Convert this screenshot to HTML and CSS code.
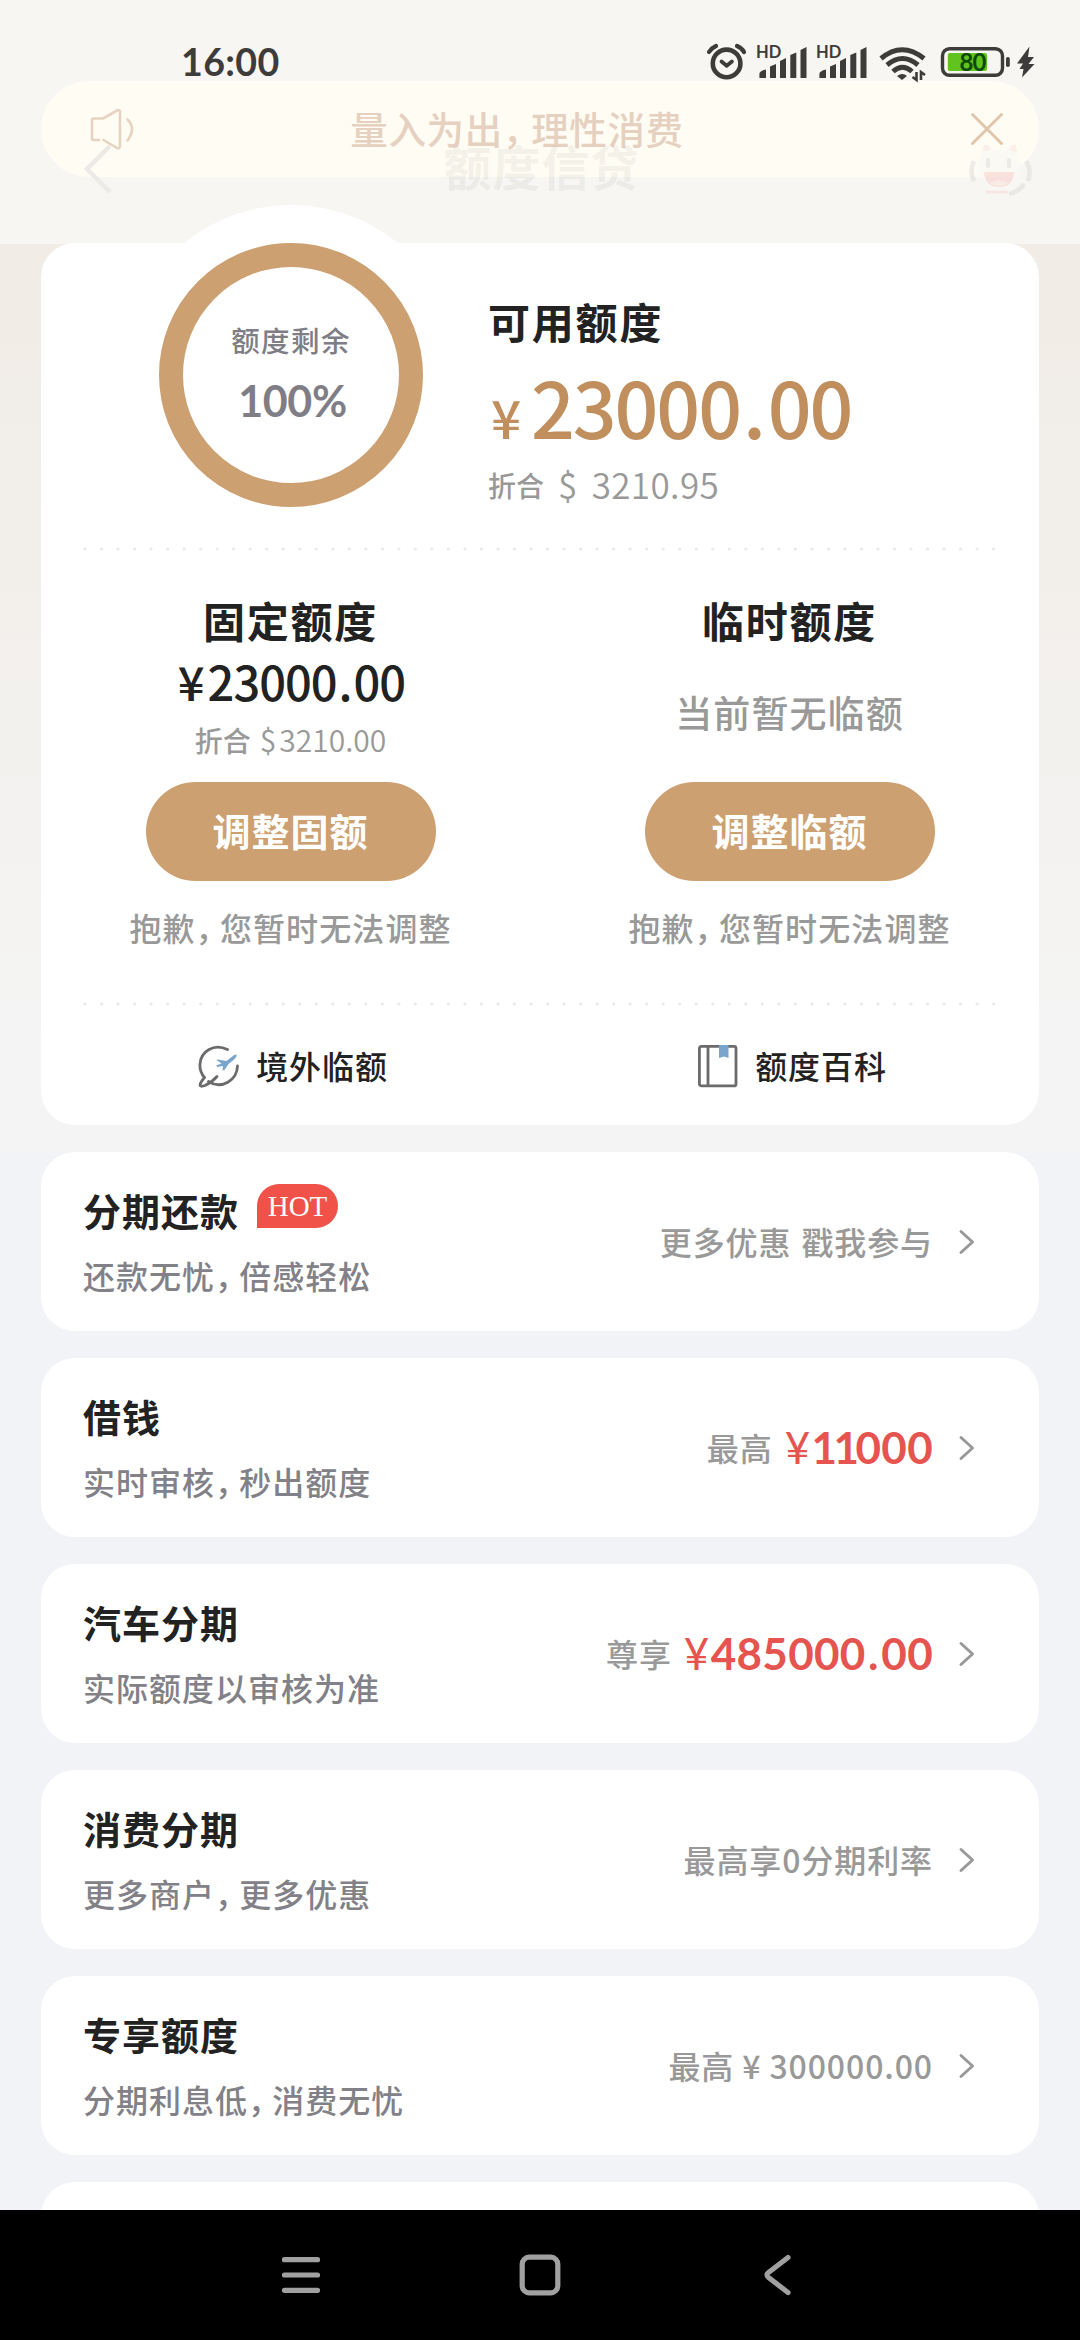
FILE: index.html
```html
<!DOCTYPE html>
<html lang="zh-CN">
<head>
<meta charset="utf-8">
<title>额度信贷</title>
<link rel="stylesheet" href="styles.css">
</head>
<body>
<div class="screen">
  <header class="header">
    <div class="status">
      <span class="time">16:00</span>
      <svg class="status-icons" width="330" height="44" viewBox="710 40 330 44">
        <g fill="none" stroke="#3d3c3a" stroke-linecap="round">
          <circle cx="725.6" cy="63.4" r="13.8" stroke-width="4.6"/>
          <path d="M720.5 61.5l5.2 4.3 5.2-4.3" stroke-width="3.8" stroke-linejoin="round"/>
          <path d="M708 52q2.500-4 7-6M736 46q5 2 7 6" stroke-width="4.200"/>
        </g>
        <g fill="#3d3c3a">
          <text class="hd" x="755" y="58">HD</text>
          <g id="bars"><path d="M758.400 78v-4q0-3 6.600-4.500v8.500zM769 78V66.500l6-2.500v14zM779 78V61l6-3v20zM789.300 78V55l6-2.500V78zM799.500 78V50l6-3V78z"/></g>
          <text class="hd" x="815" y="58">HD</text>
          <use href="#bars" x="60"/>
        </g>
        <g fill="none" stroke="#3d3c3a" stroke-width="5">
          <path d="M880 58.500q21-17.500 43 0"/>
          <path d="M886 65q15.500-13 31 0"/>
          <path d="M892 71.500q9.500-8.500 19 0"/>
        </g>
        <path d="M896 76q5.500-4 10 0l-5 4z" fill="#3d3c3a"/>
        <path d="M915.500 72v8l-4-3M920 80v-8l4 3" fill="none" stroke="#3d3c3a" stroke-width="2.600"/>
        <rect x="941.500" y="48.700" width="60" height="26.600" rx="7" fill="none" stroke="#3d3c3a" stroke-width="3.400"/>
        <rect x="946.800" y="53" width="39.200" height="18" rx="2" fill="#61c41e"/>
        <rect x="1005" y="57" width="3.800" height="10" rx="1.800" fill="#3d3c3a"/>
        <text class="pct" x="958.500" y="70.500">80</text>
        <path d="M1028.500 46.500L1016 63.500h6l-3.500 5.500h4l-1.500 8.500L1033.500 64h-6l5.500-7h-6z" fill="#3d3c3a"/>
      </svg>
    </div>
    <div class="titlebar">
      <svg class="back" width="30" height="52" viewBox="0 0 30 52"><path d="M27 3L4 26l23 23" fill="none" stroke="#ebeae7" stroke-width="4.500"/></svg>
      <h1 class="title">额度信贷</h1>
      <svg class="mascot" width="64" height="56" viewBox="0 0 64 56">
        <path d="M14 14l2-10q4-2 8 5h14q4-7 8-5l3 11q6 8 5 17-3 19-22 19T9 33q-1-11 5-19z" fill="#faf8f5"/>
        <path d="M14 10l2-6q4-1 7 5zM41 9q3-6 7-5l1 8z" fill="#fae9e5"/>
        <path d="M6 20q-5 9 0 20M58 20q6 9 2 20M56 43q-5 8-15 10" fill="none" stroke="#e3e2df" stroke-width="4.500"/>
        <path d="M20 19v6M41 19v6" stroke="#dfe2da" stroke-width="4" stroke-linecap="round"/>
        <path d="M16 31h30q-1 15-15 15T16 31z" fill="#f8d5d2"/>
        <path d="M22 42q9-5 18 0-9 6-18 0z" fill="#fbe8df"/>
        <path d="M18 51h22" stroke="#f8dedc" stroke-width="3"/>
      </svg>
    </div>
    <div class="notice">
      <svg width="46" height="42" viewBox="0 0 46 42" fill="none" stroke="#e8d3c1" stroke-width="2.600" stroke-linejoin="round" stroke-linecap="round"><path d="M9 32H3.500Q2 32 2 30V12.500q0-2 2-2h9L28 2q2 0 2 2v34q0 3-3 2L13.500 32M37.500 11.500q9 9 0 21"/></svg>
      <span class="notice-text">量入为出<i class="comma">，</i>理性消费</span>
      <svg width="34" height="34" viewBox="0 0 34 34" fill="none" stroke="#e0c6ac" stroke-width="3" stroke-linecap="round"><path d="M2.500 2.500l29 29m0-29l-29 29"/></svg>
    </div>
  </header>

  <main class="content">
    <section class="summary">
      <div class="overview">
        <div class="ring">
          <span class="ring-label">额度剩余</span>
          <span class="ring-value">100%</span>
        </div>
        <div class="available">
          <h2 class="heading">可用额度</h2>
          <div class="amount"><span class="yen">¥</span><span class="big">23000<i>.</i>00</span></div>
          <div class="converted"><span>折合</span><span class="usd">$</span><span class="usd">3210.95</span></div>
        </div>
      </div>
      <svg class="dots" width="912" height="4" viewBox="0 0 912 4"><path d="M2 2h909" stroke="#e9e9e9" stroke-width="3.200" stroke-linecap="round" stroke-dasharray="0 16.520"/></svg>
      <div class="columns">
        <div class="column">
          <h2 class="heading">固定额度</h2>
          <div class="fixed">¥<b>23000<i>.</i>00</b></div>
          <div class="fixed-usd"><span>折合</span><span class="usd-small">$</span><span class="usd-small">3210.00</span></div>
          <button class="button">调整固额</button>
          <p class="hint">抱歉<i class="comma">，</i>您暂时无法调整</p>
        </div>
        <div class="column">
          <h2 class="heading">临时额度</h2>
          <div class="none">当前暂无临额</div>
          <button class="button">调整临额</button>
          <p class="hint">抱歉<i class="comma">，</i>您暂时无法调整</p>
        </div>
      </div>
      <svg class="dots" width="912" height="4" viewBox="0 0 912 4"><path d="M2 2h909" stroke="#e9e9e9" stroke-width="3.200" stroke-linecap="round" stroke-dasharray="0 16.520"/></svg>
      <div class="links">
        <a class="link">
          <svg width="42" height="44" viewBox="0 0 42 44" fill="none" stroke-linecap="round" stroke-linejoin="round">
            <path d="M29.500 5.500C16-1 3 7 2 20c-.4 6 1.500 10 4.500 13.500M39.500 22C39 36 24 46 10.500 37.500M6.500 33.500C1 40 0 44 7 41.500 12 39 16 36 19 32.500" stroke="#6b6b6b" stroke-width="2.800"/>
            <path d="M19.500 15.500l9 1.500 7-5.500q4-2 3 .5-.6 2-3 4l-5 4-4 6-2 .5.500-4.500-5.500 1-1.500-1.500 5.500-2-5-3.500z" fill="#78a4ce"/>
          </svg>
          <span>境外临额</span>
        </a>
        <a class="link">
          <svg width="42" height="44" viewBox="0 0 42 44" fill="none" stroke="#6b6b6b" stroke-width="2.800">
            <rect x="2.400" y="2.400" width="36.600" height="39.500" rx="2"/>
            <path d="M11 2v40"/>
            <path d="M22 1h9.500v13L27 12.500 22 14z" fill="#78a4ce" stroke="none"/>
          </svg>
          <span>额度百科</span>
        </a>
      </div>
    </section>

    <section class="row">
      <div class="row-main"><h3>分期还款<span class="badge">HOT</span></h3><p>还款无忧<i class="comma">，</i>倍感轻松</p></div>
      <div class="row-side">更多优惠<i class="space"></i>戳我参与</div>
      <svg class="chevron" width="18" height="26" viewBox="0 0 18 26"><path d="M3 2.500L14.500 13 3 23.500"/></svg>
    </section>
    <section class="row">
      <div class="row-main"><h3>借钱</h3><p>实时审核<i class="comma">，</i>秒出额度</p></div>
      <div class="row-side">最高<span class="red"><i>¥</i><span class="ones">11</span>000</span></div>
      <svg class="chevron" width="18" height="26" viewBox="0 0 18 26"><path d="M3 2.500L14.500 13 3 23.500"/></svg>
    </section>
    <section class="row">
      <div class="row-main"><h3>汽车分期</h3><p>实际额度以审核为准</p></div>
      <div class="row-side">尊享<span class="red"><i>¥</i>485000<span class="point">.</span>00</span></div>
      <svg class="chevron" width="18" height="26" viewBox="0 0 18 26"><path d="M3 2.500L14.500 13 3 23.500"/></svg>
    </section>
    <section class="row">
      <div class="row-main"><h3>消费分期</h3><p>更多商户<i class="comma">，</i>更多优惠</p></div>
      <div class="row-side">最高享<span class="zero">0</span>分期利率</div>
      <svg class="chevron" width="18" height="26" viewBox="0 0 18 26"><path d="M3 2.500L14.500 13 3 23.500"/></svg>
    </section>
    <section class="row">
      <div class="row-main"><h3>专享额度</h3><p>分期利息低<i class="comma">，</i>消费无忧</p></div>
      <div class="row-side">最高<span class="plain">¥ 300000.00</span></div>
      <svg class="chevron" width="18" height="26" viewBox="0 0 18 26"><path d="M3 2.500L14.500 13 3 23.500"/></svg>
    </section>
    <section class="row"></section>
  </main>

  <nav class="navbar">
    <svg width="44" height="44" viewBox="0 0 44 44"><path d="M5.500 6.700h33M5.500 22h33M5.500 37.300h33"/></svg>
    <svg width="44" height="44" viewBox="0 0 44 44"><rect x="4.200" y="4.200" width="35.600" height="35.600" rx="7"/></svg>
    <svg width="44" height="44" viewBox="0 0 44 44"><path d="M32 4.500L12.500 19.500q-3 2.500 0 5L32 39.500"/></svg>
  </nav>
</div>
</body>
</html>
```
FILE: styles.css
```css
* { box-sizing: border-box; margin: 0; padding: 0; }
body {
  width: 1080px;
  height: 2340px;
  overflow: hidden;
  font-family: "Noto Sans CJK SC", sans-serif;
  color: #222;
}
svg { display: block; flex: none; }
h1, h2, h3 { font-weight: 700; }
i { font-style: normal; }
.screen { display: flex; flex-direction: column; height: 2340px; background: #f2f3f7; }

.header { position: relative; flex: none; height: 244px; background: #f7f6f3; }
.status { display: flex; justify-content: space-between; align-items: center; height: 124px; padding: 0 39px 0 181px; position: relative; z-index: 2; }
.time { font: 700 37.500px/50px Lato, sans-serif; color: #3d3c3a; letter-spacing: .4px; }
.status-icons { overflow: visible; }
.hd { font: 700 16.5px Lato, sans-serif; }
.pct { font: 700 24px Lato, sans-serif; fill: #0d4a05; letter-spacing: -1px; }
.titlebar { display: flex; align-items: center; justify-content: space-between; height: 90px; padding: 0 48px 0 83px; position: relative; z-index: 2; }
.title { font-size: 48px; line-height: 60px; margin: 0 0 9px 2px; font-weight: 700; letter-spacing: 1px; color: rgba(80, 80, 80, .08); }
.mascot { opacity: .65; }
.notice {
  position: absolute; left: 41px; top: 81px; z-index: 1;
  width: 998px; height: 96px; padding: 0 35px 0 49px;
  display: flex; align-items: center; justify-content: space-between;
  border-radius: 48px; background: #fffcf4;
}
.notice-text { margin: 0 72px 3px 0; font-size: 37.500px; font-weight: 500; letter-spacing: .6px; line-height: 50px; color: #e6d0bf; }
.comma { display: inline-block; width: .76em; letter-spacing: 0; text-indent: 0; }

.content {
  flex: 1; min-height: 0; overflow: visible; padding: 0 41px;
  display: flex; flex-direction: column; gap: 27px;
  background: linear-gradient(#f1ece5, #f4f4f4 800px, #f4f4f4) no-repeat 0 0 / 100% 908px;
}
.summary { position: relative; flex: none; height: 882px; margin-top: -1px; border-radius: 34px; background: #fff; }
.overview { display: flex; gap: 65px; height: 304px; padding-left: 118px; }
.ring {
  width: 264px; height: 264px; border: 24.500px solid #cda071; border-radius: 50%;
  background: #fff; box-shadow: 0 0 0 38px #fff;
  display: flex; flex-direction: column; align-items: center; padding-top: 51px; color: #7f7e86;
}
.ring-label { font-size: 28.500px; font-weight: 500; line-height: 44px; letter-spacing: 1.400px; }
.ring-value { font: 700 43px/50px Lato, sans-serif; margin: 14px 0 0 3px; letter-spacing: -.4px; }
.available { display: flex; flex-direction: column; padding-top: 48px; position: relative; }
.heading { font-size: 42px; line-height: 60px; letter-spacing: 1.800px; white-space: nowrap; }
.amount { display: flex; align-items: baseline; height: 100px; margin-top: 5px; color: #c18f5e; }
.yen { font-size: 53px; width: 43px; padding-left: 3px; font-weight: 500; }
.big { font-size: 77px; line-height: 100px; letter-spacing: -2.100px; font-weight: 500; }
.big i { margin: 0 4px 0 3px; }
.converted { display: flex; align-items: center; margin-top: 4px; height: 50px; font-size: 28px; font-weight: 500; color: #999; }
.usd { font-size: 35px; font-weight: 350; line-height: 50px; margin: 0 0 3px 14px; letter-spacing: .4px; }

.dots { margin: 0 0 0 42px; }
.columns { display: grid; grid-template-columns: 1fr 1fr; height: 451px; }
.column { display: flex; flex-direction: column; align-items: center; padding-top: 39px; }
.fixed { font-size: 47px; font-weight: 500; line-height: 60px; letter-spacing: -1px; margin: 1px 0 0 2px; }
.fixed b { font-weight: 500; margin-left: 4px; }
.fixed i { margin: 0 2px; }
.fixed-usd { display: flex; align-items: center; height: 44px; margin-top: 7px; font-size: 28px; font-weight: 500; color: #999; }
.usd-small { font-size: 30px; font-weight: 350; line-height: 44px; margin: 0 0 2px 9px; }
.usd-small + .usd-small { margin-left: 3px; }
.none { font-size: 37px; font-weight: 500; letter-spacing: 1.100px; line-height: 60px; margin: 32px 0 20px; color: #999; }
.button {
  width: 290px; height: 99px; margin-top: 20px; padding-bottom: 3px; border: 0; border-radius: 50px;
  background: #cda071; color: #fff; font: 700 38px/60px "Noto Sans CJK SC", sans-serif; letter-spacing: 1px;
}
.hint { font-size: 32px; font-weight: 500; line-height: 50px; letter-spacing: 1.100px; margin-top: 21px; color: #999; white-space: nowrap; }
.links { display: grid; grid-template-columns: 1fr 1fr; height: 120px; }
.link { display: flex; align-items: center; justify-content: center; gap: 16px; padding-left: 5px; font-size: 32px; font-weight: 500; letter-spacing: .9px; }
.link span { margin-bottom: 3px; }

.row { flex: none; display: flex; height: 179px; padding: 0 63px 0 42px; border-radius: 34px; background: #fff; }
.row-main { flex: 1; padding-top: 33px; }
.row h3 { display: flex; font-size: 38px; line-height: 50px; letter-spacing: 1px; }
.row p { margin-top: 15px; font-size: 32px; font-weight: 500; line-height: 50px; letter-spacing: 1px; color: #828188; }
.badge {
  width: 81px; height: 44px; margin: -1px 0 0 18px; border-radius: 22px 22px 22px 0;
  background: #f0524a; color: #fff; font: 400 29px/45px "Liberation Serif", serif; letter-spacing: 0; text-align: center;
}
.row-side { display: flex; align-items: center; height: 177px; font-size: 32px; font-weight: 500; letter-spacing: .900px; color: #999; }
.space { width: 10px; }
.red { font: 700 44px/50px Lato, sans-serif; letter-spacing: .3px; margin: 1px 0 0 12px; color: #e5544f; }
.red i { font-weight: 400; margin-right: 1px; }
.ones { letter-spacing: -3.500px; }
.point { margin: 0 2.500px; }
.zero { font-weight: 500; }
.plain { font-family: "Noto Sans CJK SC", sans-serif; font-size: 32px; margin-left: 8px; letter-spacing: .9px; }
.chevron { align-self: center; margin-left: 25px; fill: none; stroke: #999; stroke-width: 3; stroke-linecap: round; stroke-linejoin: round; }

.navbar { position: relative; flex: none; display: flex; justify-content: space-between; align-items: flex-start; height: 130px; padding: 43px 280px 0 279px; background: #000; }
.navbar svg { fill: none; stroke: #a0a0a0; stroke-width: 5.200; stroke-linecap: round; stroke-linejoin: round; }
```
